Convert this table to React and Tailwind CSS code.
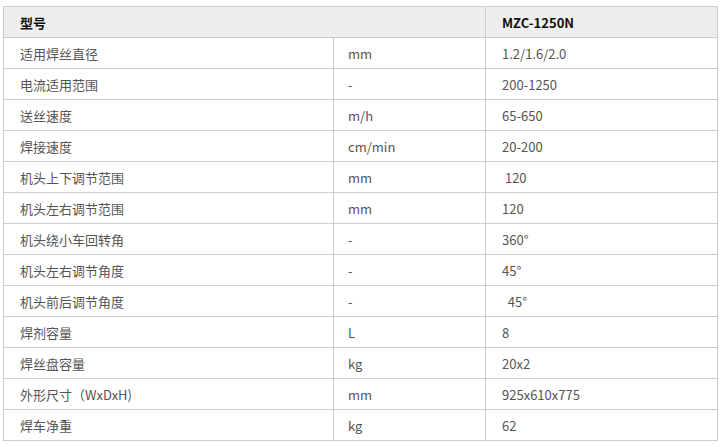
const rows = [
  ["适用焊丝直径", "mm", "1.2/1.6/2.0"],
  ["电流适用范围", "-", "200-1250"],
  ["送丝速度", "m/h", "65-650"],
  ["焊接速度", "cm/min", "20-200"],
  ["机头上下调节范围", "mm", "\u00a0120"],
  ["机头左右调节范围", "mm", "120"],
  ["机头绕小车回转角", "-", "360°"],
  ["机头左右调节角度", "-", "45°"],
  ["机头前后调节角度", "-", "\u00a0\u00a045°"],
  ["焊剂容量", "L", "8"],
  ["焊丝盘容量", "kg", "20x2"],
  ["外形尺寸（WxDxH)", "mm", "925x610x775"],
  ["焊车净重", "kg", "62"],
];

const App = () => {
  return (
    <div className="w-[720px] h-[447px] bg-white pt-[6px] pl-[3px] font-['Noto_Sans_CJK_SC',sans-serif] text-[13px]">
      <table className="w-[714px] border-collapse table-fixed">
        <colgroup>
          <col className="w-[330px]" />
          <col className="w-[152px]" />
          <col className="w-[232px]" />
        </colgroup>
        <thead>
          <tr className="h-[31px] bg-[#eeeeee]">
            <th colSpan={2} className="border border-[#cccccc] px-4 pt-[1px] text-left font-bold text-[#111]">
              型号
            </th>
            <th className="border border-[#cccccc] px-4 pt-[1px] text-left font-bold text-[#111]">
              MZC-1250N
            </th>
          </tr>
        </thead>
        <tbody>
          {rows.map((r) => (
            <tr key={r[0]} className="h-[31px]">
              <td className="border border-[#cccccc] px-4 pt-[1px] text-[#555]">{r[0]}</td>
              <td className="border border-[#cccccc] pl-[14px] pt-[1px] text-[#555]">{r[1]}</td>
              <td className="border border-[#cccccc] px-4 pt-[1px] text-[#555]">{r[2]}</td>
            </tr>
          ))}
        </tbody>
      </table>
    </div>
  );
};

export default App;
